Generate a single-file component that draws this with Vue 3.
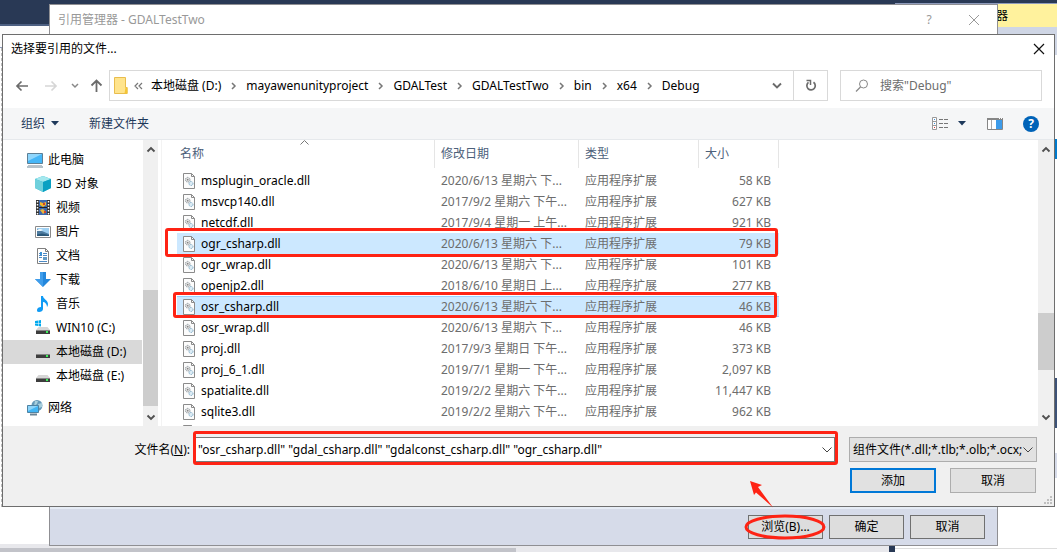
<script setup>
import { ref } from 'vue'

const crumbs = ['本地磁盘 (D:)', 'mayawenunityproject', 'GDALTest', 'GDALTestTwo', 'bin', 'x64', 'Debug']

const places = [
  { name: '此电脑', icon: 'pc', root: true },
  { name: '3D 对象', icon: 'cube' },
  { name: '视频', icon: 'video' },
  { name: '图片', icon: 'picture' },
  { name: '文档', icon: 'document' },
  { name: '下载', icon: 'download' },
  { name: '音乐', icon: 'music' },
  { name: 'WIN10 (C:)', icon: 'windisk' },
  { name: '本地磁盘 (D:)', icon: 'disk', active: true },
  { name: '本地磁盘 (E:)', icon: 'disk' },
  { name: '网络', icon: 'network', root: true, gap: true }
]

const type = '应用程序扩展'
const files = [
  { name: 'msplugin_oracle.dll', date: '2020/6/13 星期六 下...', type, size: '58 KB' },
  { name: 'msvcp140.dll', date: '2017/9/2 星期六 下午...', type, size: '627 KB' },
  { name: 'netcdf.dll', date: '2017/9/4 星期一 上午...', type, size: '921 KB' },
  { name: 'ogr_csharp.dll', date: '2020/6/13 星期六 下...', type, size: '79 KB', selected: true },
  { name: 'ogr_wrap.dll', date: '2020/6/13 星期六 下...', type, size: '101 KB' },
  { name: 'openjp2.dll', date: '2018/6/10 星期日 上...', type, size: '277 KB' },
  { name: 'osr_csharp.dll', date: '2020/6/13 星期六 下...', type, size: '46 KB', selected: true, focused: true },
  { name: 'osr_wrap.dll', date: '2020/6/13 星期六 下...', type, size: '46 KB' },
  { name: 'proj.dll', date: '2017/9/3 星期日 下午...', type, size: '373 KB' },
  { name: 'proj_6_1.dll', date: '2019/7/1 星期一 下午...', type, size: '2,097 KB' },
  { name: 'spatialite.dll', date: '2019/2/2 星期六 下午...', type, size: '11,447 KB' },
  { name: 'sqlite3.dll', date: '2019/2/2 星期六 下午...', type, size: '962 KB' },
  { name: '', date: '', type: '', size: '' }
]

const fileName = ref('"osr_csharp.dll" "gdal_csharp.dll" "gdalconst_csharp.dll" "ogr_csharp.dll"')
const search = ref('')
</script>

<template>
  <div class="desktop">
    <div class="ide-top"></div>
    <div class="ide-tabs"></div>
    <div class="ide-left"></div>
    <div class="ide-side">
      <div class="side-title">器</div>
      <div class="side-tools"></div>
      <div class="side-rest"></div>
      <div class="side-blue"></div>
      <div class="side-navy"></div>
      <div class="side-pale"></div>
    </div>
    <div class="ide-bottom">
      <div class="track"><div class="track-thumb"></div></div>
      <div class="splitter"></div>
      <div class="bottom-right"></div>
    </div>

    <section class="manager">
      <header class="manager-title">
        <span>引用管理器 - GDALTestTwo</span>
        <button class="bare" aria-label="帮助">?</button>
        <button class="bare" aria-label="关闭">
          <svg width="12" height="12" viewBox="0 0 12 12"><path d="M1 1 11 11M11 1 1 11" stroke="#999" fill="none" /></svg>
        </button>
      </header>
      <footer class="manager-actions">
        <button class="btn dark browse">
          浏览(B)...
          <svg class="ring" width="84" height="27" viewBox="0 0 84 27"><ellipse cx="41" cy="13" rx="39" ry="11" fill="none" stroke="#fe2314" stroke-width="3" /></svg>
        </button>
        <button class="btn dark">确定</button>
        <button class="btn dark">取消</button>
      </footer>
    </section>

    <section class="dialog">
      <header class="dialog-title">
        <h1>选择要引用的文件...</h1>
        <button class="bare" aria-label="关闭">
          <svg width="12" height="12" viewBox="0 0 12 12"><path d="M1 1 11 11M11 1 1 11" stroke="#111" stroke-width="1.2" fill="none" /></svg>
        </button>
      </header>

      <nav class="navbar">
        <button class="bare back" aria-label="后退">
          <svg width="14" height="12" viewBox="0 0 14 12"><path d="M13 6H2M6.500 1.500 2 6l4.500 4.500" fill="none" stroke="#6b6b6b" stroke-width="1.700" /></svg>
        </button>
        <button class="bare forward" aria-label="前进">
          <svg width="14" height="12" viewBox="0 0 14 12"><path d="M1 6h11M7.500 1.500 12 6l-4.500 4.500" fill="none" stroke="#d6d6d6" stroke-width="1.700" /></svg>
        </button>
        <button class="bare recent" aria-label="最近位置">
          <svg width="8" height="6" viewBox="0 0 8 6"><path d="M1 1 4 4 7 1" fill="none" stroke="#888" stroke-width="1.500" /></svg>
        </button>
        <button class="bare up" aria-label="上移">
          <svg width="13" height="14" viewBox="0 0 13 14"><path d="M6.500 13V2M1.500 6.500l5-5 5 5" fill="none" stroke="#6b6b6b" stroke-width="1.800" /></svg>
        </button>
        <div class="address">
          <svg class="folder" width="14" height="17" viewBox="0 0 14 17">
            <path d="M.5.5h11v10h1.700v6H.5z" fill="#ffe48c" stroke="#e9bd4d" />
            <path d="M11.500 10.500h1.700v6h-2.700z" fill="#f4c636" />
          </svg>
          <svg class="more" width="9" height="8" viewBox="0 0 9 8"><path d="M4 1 1 4l3 3M8 1 5 4l3 3" fill="none" stroke="#777" stroke-width="1.200" /></svg>
          <template v-for="(c, i) in crumbs" :key="c">
            <svg v-if="i" class="sep" width="25" height="8" viewBox="0 0 25 8"><path d="M11 1l3 3-3 3" fill="none" stroke="#777" stroke-width="1.500" /></svg>
            <a href="#">{{ c }}</a>
          </template>
          <button class="bare history" aria-label="历史记录">
            <svg width="10" height="7" viewBox="0 0 10 7"><path d="M1 1.500l4 4 4-4" fill="none" stroke="#6b6b6b" stroke-width="1.900" /></svg>
          </button>
          <button class="bare refresh" aria-label="刷新">
            <svg width="12" height="13" viewBox="0 0 12 13"><path d="M8.500 3.300A4.200 4.200 0 1 1 3.500 3.400" fill="none" stroke="#6b6b6b" stroke-width="1.700" /><path d="M1.500 1.500H5.500V6" fill="none" stroke="#6b6b6b" stroke-width="1.500" /></svg>
          </button>
        </div>
        <label class="search">
          <svg width="14" height="14" viewBox="0 0 14 14"><circle cx="8.500" cy="5" r="4" fill="none" stroke="#888" /><path d="M5.500 8 1 12.500" stroke="#888" stroke-width="1.300" /></svg>
          <input v-model="search" type="text" placeholder='搜索"Debug"' aria-label="搜索" />
        </label>
      </nav>

      <div class="toolbar">
        <button class="bare tool">组织
          <svg width="8" height="5" viewBox="0 0 8 5"><path d="M0 0h8L4 4.500z" fill="#1e395b" /></svg>
        </button>
        <button class="bare tool">新建文件夹</button>
        <span class="spring"></span>
        <button class="bare view" aria-label="更改视图">
          <svg width="17" height="13" viewBox="0 0 17 13">
            <path d="M.5.5h4v12h-4zM.5 4.500h4M.5 8.500h4" fill="#fff" stroke="#999" />
            <path d="M2 2h1v1H2zM2 6h1v1H2z" fill="#3c92e0" /><path d="M2 10h1v1H2z" fill="#d33" />
            <path d="M7 2.500h4M12 2.500h4M7 6.500h4M12 6.500h4M7 10.500h4M12 10.500h4" stroke="#777" />
          </svg>
        </button>
        <button class="bare view-more" aria-label="视图选项">
          <svg width="8" height="5" viewBox="0 0 8 5"><path d="M0 0h8L4 4.500z" fill="#1e395b" /></svg>
        </button>
        <button class="bare preview" aria-label="预览窗格">
          <svg width="16" height="12" viewBox="0 0 16 12">
            <path d="M.5.5h15v11H.5z" fill="#fff" stroke="#868686" /><path d="M0 0h16v2H0z" fill="#868686" />
            <path d="M4.500 2v9" stroke="#aaa" /><path d="M9 2h6v9H9z" fill="#3d9be9" /><path d="M12 .5h1M14 .5h1" stroke="#fff" />
          </svg>
        </button>
        <button class="bare help" aria-label="帮助">?</button>
      </div>

      <div class="body">
        <ul class="tree">
          <li v-for="p in places" :key="p.name" :class="{ root: p.root, active: p.active, gap: p.gap }">
            <svg width="16" height="16" viewBox="0 0 16 16">
              <g v-if="p.icon === 'pc'">
                <path d="M.5 1.500h15v10H.5z" fill="#45b6f7" stroke="#5d7f95" /><path d="M1 2h14L1 9z" fill="#8fd6fc" />
                <path d="M1 13.500h14" stroke="#b9c3ca" /><path d="M0 15h16" stroke="#6d8594" />
              </g>
              <g v-else-if="p.icon === 'cube'">
                <path d="M8 0l8 3v9l-8 4-8-4V3z" fill="#2bb5cd" /><path d="M8 0l8 3-8 3-8-3z" fill="#a5e8ee" />
                <path d="M0 3l8 3v10l-8-4z" fill="#6fd0dc" /><path d="M8 6l8-3v9l-8 4z" fill="#0ba0c2" />
              </g>
              <g v-else-if="p.icon === 'video'">
                <path d="M1 0h14v15H1z" fill="#333" /><path d="M4 0h8v15H4z" fill="#3c69ae" />
                <path d="M2.500 1v14M13.500 1v14" stroke="#fff" stroke-width="1.500" stroke-dasharray="1.500 1.500" />
                <path d="M5 2l3 1 3-1v3L8 7 5 5z" fill="#f2b92b" /><path d="M4 7.500h8" stroke="#222" /><path d="M5 10l3-1 3 3-3 2z" fill="#e8b53c" /><path d="M8 3h2v2H8zM9 11h2v2H9z" fill="#cf4230" />
              </g>
              <g v-else-if="p.icon === 'picture'">
                <path d="M.5 2.500h15v11H.5z" fill="#fff" stroke="#8a8a8a" /><path d="M2 4h12v8H2z" fill="#9fd0f2" />
                <path d="M2 5l5 2 7 3v2H2z" fill="#4f7ca0" /><path d="M2 10.500l5-1 7 1.500v1H2z" fill="#2b5879" /><path d="M2 6q3-2 6 0l-2 1H2z" fill="#eef7fc" />
              </g>
              <g v-else-if="p.icon === 'document'">
                <path d="M2.500.5h8l3 3v12h-11z" fill="#fff" stroke="#808080" /><path d="M10.500.5v3h3" fill="none" stroke="#808080" />
                <path d="M4 5.500h3M8 5.500h4M4 7.500h3M8 7.500h4M4 9.500h3M4 13.500h8" stroke="#4c89c4" /><path d="M5 4h2v3H5z" fill="#3a94d8" /><path d="M8 9h4v3H8z" fill="#639ac5" />
              </g>
              <g v-else-if="p.icon === 'download'"><path d="M5 0h6v7h5l-8 8-8-8h5z" fill="#2487dc" /><path d="M5 0h3v15L0 7h5z" fill="#3f9deb" /></g>
              <g v-else-if="p.icon === 'music'"><path d="M6 0h2c0 3 5 4 5 8 0 2-1 3-1 3 0-3-2-5-4-5v7c0 2-2 3-4 3s-2-1-2-2c0-2 2-3 4-3z" fill="#109bf5" /></g>
              <g v-else-if="p.icon === 'network'">
                <circle cx="10" cy="5.500" r="5.500" fill="#6599b9" /><path d="M8 1l3 0-1 3-3 2zM11 4l4-1v4l-3 1z" fill="#a8cfdd" />
                <path d="M.5 5.500h11v7H.5z" fill="#42b5f4" stroke="#4e83a3" /><path d="M1 6h10L1 11z" fill="#8dd4fa" /><path d="M3 14.500h7" stroke="#6b8495" stroke-width="2" />
              </g>
              <g v-else>
                <path v-if="p.icon === 'windisk'" d="M0 1l3-.5V3H0zM3.500.5L6 0v3H3.500zM0 3.500h3V6L0 5.500zM3.500 3.500H6v3L3.500 6z" fill="#00a9ee" />
                <path d="M3.500 7h9l2.500 3H1z" fill="#d6d6d6" /><path d="M1 10h14v4H1z" fill="#3d3d3d" /><path d="M1 10.500h14" stroke="#868686" /><path d="M11 12h2" stroke="#3cf05a" stroke-width="2" />
              </g>
            </svg>
            <span>{{ p.name }}</span>
          </li>
        </ul>
        <div class="scroll tree-scroll">
          <svg width="10" height="7" viewBox="0 0 10 7"><path d="M1.500 5.500 5 2l3.500 3.500" fill="none" stroke="#505050" stroke-width="1.900" /></svg>
          <i class="thumb"></i>
          <svg width="10" height="7" viewBox="0 0 10 7"><path d="M1.500 1.500 5 5l3.500-3.500" fill="none" stroke="#505050" stroke-width="1.900" /></svg>
        </div>
        <div class="files">
          <svg class="sort" width="9" height="5" viewBox="0 0 9 5"><path d="M.5 4.500l4-4 4 4" fill="none" stroke="#777" /></svg>
          <table>
            <colgroup><col class="c-name" /><col class="c-date" /><col class="c-type" /><col class="c-size" /></colgroup>
            <thead>
              <tr><th>名称</th><th>修改日期</th><th>类型</th><th>大小</th></tr>
            </thead>
            <tbody>
              <tr v-for="f in files" :key="f.name" :class="{ selected: f.selected, focused: f.focused }">
                <td>
                  <div class="file">
                    <svg width="12" height="16" viewBox="0 0 12 16">
                      <path d="M.5.5h8l3 3v12H.5z" fill="#fcfcfc" stroke="#8b8b8b" /><path d="M8.500.5v3h3" fill="none" stroke="#8b8b8b" />
                      <circle cx="4.700" cy="6.700" r="2.300" fill="#ddd" stroke="#8d979e" stroke-dasharray="1.200 .6" /><circle cx="4.700" cy="6.700" r=".8" fill="#777" />
                      <circle cx="8" cy="10.500" r="2" fill="#dcecf5" stroke="#7daac5" stroke-dasharray="1.200 .6" />
                    </svg>
                    <span>{{ f.name }}</span>
                  </div>
                </td>
                <td>{{ f.date }}</td>
                <td>{{ f.type }}</td>
                <td>{{ f.size }}</td>
              </tr>
            </tbody>
          </table>
        </div>
        <div class="scroll file-scroll">
          <svg width="10" height="7" viewBox="0 0 10 7"><path d="M1.500 5.500 5 2l3.500 3.500" fill="none" stroke="#505050" stroke-width="1.900" /></svg>
          <i class="thumb"></i>
          <svg width="10" height="7" viewBox="0 0 10 7"><path d="M1.500 1.500 5 5l3.500-3.500" fill="none" stroke="#505050" stroke-width="1.900" /></svg>
        </div>
      </div>

      <footer class="dialog-foot">
        <div class="fields">
          <label for="file-name">文件名(<u>N</u>):</label>
          <div class="combo">
            <input id="file-name" v-model="fileName" type="text" />
            <svg width="10" height="6" viewBox="0 0 10 6"><path d="M.5.5 5 5 9.500.5" fill="none" stroke="#444" /></svg>
            <i class="mark"></i>
          </div>
          <div class="filter">
            <select aria-label="文件类型"><option>组件文件(*.dll;*.tlb;*.olb;*.ocx;</option></select>
            <svg width="10" height="6" viewBox="0 0 10 6"><path d="M.5.5 5 5 9.500.5" fill="none" stroke="#444" /></svg>
          </div>
        </div>
        <div class="actions">
          <button class="btn primary">添加</button>
          <button class="btn">取消</button>
        </div>
        <svg class="grip" width="8" height="8" viewBox="0 0 8 8"><path d="M6 0h2v2H6zM3 3h2v2H3zM6 3h2v2H6zM0 6h2v2H0zM3 6h2v2H3zM6 6h2v2H6z" fill="#bfbfbf" /></svg>
      </footer>
    </section>

    <i class="mark row-a"></i>
    <i class="mark row-b"></i>
    <svg class="arrow" width="26" height="27" viewBox="0 0 26 27"><path d="M1 0l12 4-4 2 15 20.500L7 11.500 5 14z" fill="#fe2314" /></svg>
  </div>
</template>

<style>
body {
  margin: 0;
}
</style>

<style scoped>
* {
  box-sizing: border-box;
}
.desktop {
  position: relative;
  height: 100vh;
  min-height: 500px;
  overflow: hidden;
  background: #fff;
  color: #000;
  font: 12px/16px "Noto Sans", "Noto Sans CJK SC", sans-serif;
}
button,
input,
select {
  font: inherit;
  color: inherit;
}
svg {
  display: block;
  flex: none;
}
.bare {
  display: flex;
  align-items: center;
  justify-content: center;
  padding: 0;
  border: 0;
  background: none;
}

/* editor behind the windows */
.ide-top {
  height: 26px;
  background: #293955;
  border-bottom: 2px solid #4d6082;
}
.ide-tabs {
  height: 22px;
  background: #fcfcfc;
  border-bottom: 1px solid #8e9bbc;
}
.ide-left {
  position: absolute;
  left: 0;
  top: 48px;
  bottom: 45px;
  width: 2px;
  border-right: 1px dashed #bbb;
}
.ide-side {
  position: absolute;
  top: 3px;
  right: 0;
  bottom: 8px;
  width: 162px;
  display: flex;
  flex-direction: column;
  border-top: 1px solid #8e9bbc;
}
.side-title {
  height: 23px;
  padding-left: 101px;
  line-height: 23px;
  background: #fff29d;
}
.side-tools {
  height: 28px;
  background: #cfd6e5;
}
.side-rest {
  height: 84px;
}
.side-blue {
  height: 20px;
  background: #007acc;
}
.side-navy {
  height: 50px;
  margin-top: 219px;
  background: #3d5277;
}
.side-pale {
  height: 25px;
  margin-top: 25px;
  background: #d6dbe9;
}
.ide-bottom {
  position: absolute;
  left: 0;
  right: 0;
  bottom: 0;
  height: 8px;
  display: flex;
}
.track {
  flex: 889;
  padding-top: 4px;
  background: #e8e8ec;
}
.track-thumb {
  width: 58%;
  height: 4px;
  background: #c2c3c9;
}
.splitter {
  width: 6px;
  background: #293955;
}
.bottom-right {
  flex: 162;
  height: 5px;
  border-bottom: 1px solid #ddd;
}

/* reference manager window */
.manager {
  position: absolute;
  left: 49px;
  right: 59px;
  top: 4px;
  bottom: 6px;
  display: flex;
  flex-direction: column;
  justify-content: space-between;
  background: #e6ecf5;
  border: 1px solid #8f8f93;
}
.manager-title {
  display: flex;
  align-items: center;
  height: 30px;
  padding: 0 16px 0 8px;
  background: #fff;
  color: #999;
}
.manager-title span {
  flex: 1;
}
.manager-title .bare {
  width: 14px;
  margin-left: 31px;
}
.manager-actions {
  display: flex;
  justify-content: flex-end;
  gap: 6px;
  height: 36px;
  padding: 6px 12px;
  background: #d6dbe9;
}
.btn {
  position: relative;
  width: 86px;
  height: 25px;
  padding: 0;
  background: #e1e1e1;
  border: 1px solid #adadad;
}
.btn.dark {
  width: 75px;
  height: 24px;
  background: #ddd;
  border-color: #707070;
}
.btn.primary {
  border: 2px solid #0078d7;
}
.ring {
  position: absolute;
  left: -5px;
  top: -2px;
}

/* file dialog */
.dialog {
  position: absolute;
  left: 2px;
  right: 2px;
  top: 34px;
  bottom: 45px;
  display: flex;
  flex-direction: column;
  background: #fff;
  border: 1px solid #6e6e6e;
}
.dialog-title {
  display: flex;
  align-items: center;
  justify-content: space-between;
  height: 28px;
  padding: 0 9px 0 8px;
}
h1 {
  margin: 0;
  font-size: 12px;
  font-weight: 400;
}
.navbar {
  display: flex;
  align-items: center;
  height: 45px;
  padding: 0 12px;
}
.back,
.forward {
  width: 14px;
}
.forward {
  margin-left: 15px;
}
.recent {
  margin-left: 13px;
}
.up {
  margin: 0 6px 0 11px;
}
.address {
  display: flex;
  flex: 1;
  align-items: center;
  height: 31px;
  padding-left: 4px;
  border: 1px solid #d9d9d9;
}
.address a {
  color: #000;
  text-decoration: none;
  white-space: nowrap;
}
.more {
  margin: 0 8px 0 6px;
}
.history {
  width: 32px;
  height: 29px;
  margin-left: auto;
}
.refresh {
  width: 34px;
  height: 29px;
  border-left: 1px solid #d9d9d9;
}
.search {
  display: flex;
  align-items: center;
  width: 202px;
  height: 31px;
  margin-left: 12px;
  padding-left: 14px;
  border: 1px solid #d9d9d9;
}
.search input {
  flex: 1;
  min-width: 0;
  margin-left: 11px;
  padding: 0;
  border: 0;
  outline: 0;
  background: none;
}
.search input::placeholder {
  color: #6d6d6d;
}
.toolbar {
  display: flex;
  align-items: center;
  height: 32px;
  padding: 0 15px 0 18px;
  color: #1e395b;
  background: #f5f6f7;
  border-bottom: 1px solid #e6e9ec;
}
.tool {
  gap: 6px;
  margin-right: 30px;
}
.spring {
  flex: 1;
}
.view-more {
  margin-left: 9px;
}
.preview {
  margin: 0 20px 0 21px;
}
.help {
  width: 16px;
  height: 16px;
  border-radius: 50%;
  background: #0063b8;
  color: #fff;
  font-weight: 700;
}
.body {
  display: flex;
  flex: 1;
  min-height: 0;
  overflow: hidden;
}
.tree {
  width: 140px;
  margin: 0;
  padding: 8px 0 0;
  list-style: none;
}
.tree li {
  display: flex;
  align-items: center;
  gap: 5px;
  height: 24px;
  margin-right: 1px;
  padding-left: 32px;
  white-space: nowrap;
}
.tree li.root {
  padding-left: 24px;
}
.tree li.active {
  background: #d9d9d9;
}
.tree li.gap {
  margin-top: 8px;
}
.scroll {
  display: flex;
  flex-direction: column;
  align-items: center;
  width: 15px;
  padding: 6px 0 5px;
  background: #f0f0f0;
}
.thumb {
  width: 100%;
  background: #cdcdcd;
}
.tree-scroll .thumb {
  flex: 116;
  margin: 137px 0 8px;
}
.file-scroll {
  width: 16px;
}
.file-scroll .thumb {
  height: 57px;
  margin: 160px 0 auto;
}
.files {
  position: relative;
  flex: 1;
  min-width: 0;
  margin-left: 3px;
  padding-left: 15px;
  overflow: hidden;
  border-left: 1px solid #f3f3f3;
}
.sort {
  position: absolute;
  left: 138px;
  top: 0;
}
table {
  width: 602px;
  table-layout: fixed;
  border-collapse: separate;
  border-spacing: 0;
  white-space: nowrap;
}
.c-name {
  width: 258px;
}
.c-date {
  width: 144px;
}
.c-type {
  width: 120px;
}
.c-size {
  width: 80px;
}
th {
  height: 28px;
  padding: 0 6px;
  border-right: 1px solid #e5e5e5;
  color: #4c607a;
  font-weight: 400;
  text-align: left;
}
th:first-child {
  padding-left: 3px;
}
tbody::before {
  content: "";
  display: block;
  height: 2px;
}
td {
  height: 21px;
  padding: 0 6px;
  color: #6d6d6d;
}
td:first-child {
  color: #000;
}
td:last-child {
  padding-right: 8px;
  text-align: right;
}
.selected td {
  background: #cce8ff;
}
.focused td {
  box-shadow: inset 0 1px #99d1ff, inset 0 -1px #99d1ff;
}
.file {
  display: flex;
  align-items: center;
  gap: 6px;
}
.dialog-foot {
  position: relative;
  padding: 11px 17px 13px 0;
  background: #f0f0f0;
}
.fields {
  display: flex;
  align-items: center;
  gap: 5px;
}
.fields label {
  width: 187px;
  text-align: right;
}
.combo,
.filter {
  position: relative;
  display: flex;
  align-items: center;
  height: 25px;
}
.combo {
  flex: 1;
  padding: 0 2px;
  margin-right: 9px;
  background: #fff;
  border: 1px solid #7a7a7a;
}
.combo input {
  flex: 1;
  min-width: 0;
  padding: 0;
  border: 0;
  outline: 0;
}
.combo .mark {
  inset: -7px -4px -4px -3px;
}
.filter select {
  appearance: none;
  width: 188px;
  height: 25px;
  padding: 0 10px 0 3px;
  border: 1px solid #adadad;
  border-radius: 0;
  background: #e1e1e1;
}
.filter svg {
  position: absolute;
  right: 4px;
  pointer-events: none;
}
.actions {
  display: flex;
  justify-content: flex-end;
  gap: 14px;
  margin: 6px 1px 0 0;
}
.grip {
  position: absolute;
  right: 2px;
  bottom: 2px;
}

/* red annotations */
.mark {
  position: absolute;
  border: 3px solid #fe2314;
  border-radius: 3px;
  pointer-events: none;
}
.row-a {
  left: 165px;
  top: 228px;
  width: 613px;
  height: 29px;
}
.row-b {
  left: 173px;
  top: 292px;
  width: 604px;
  height: 26px;
}
.arrow {
  position: absolute;
  right: 282px;
  bottom: 44px;
}
</style>
